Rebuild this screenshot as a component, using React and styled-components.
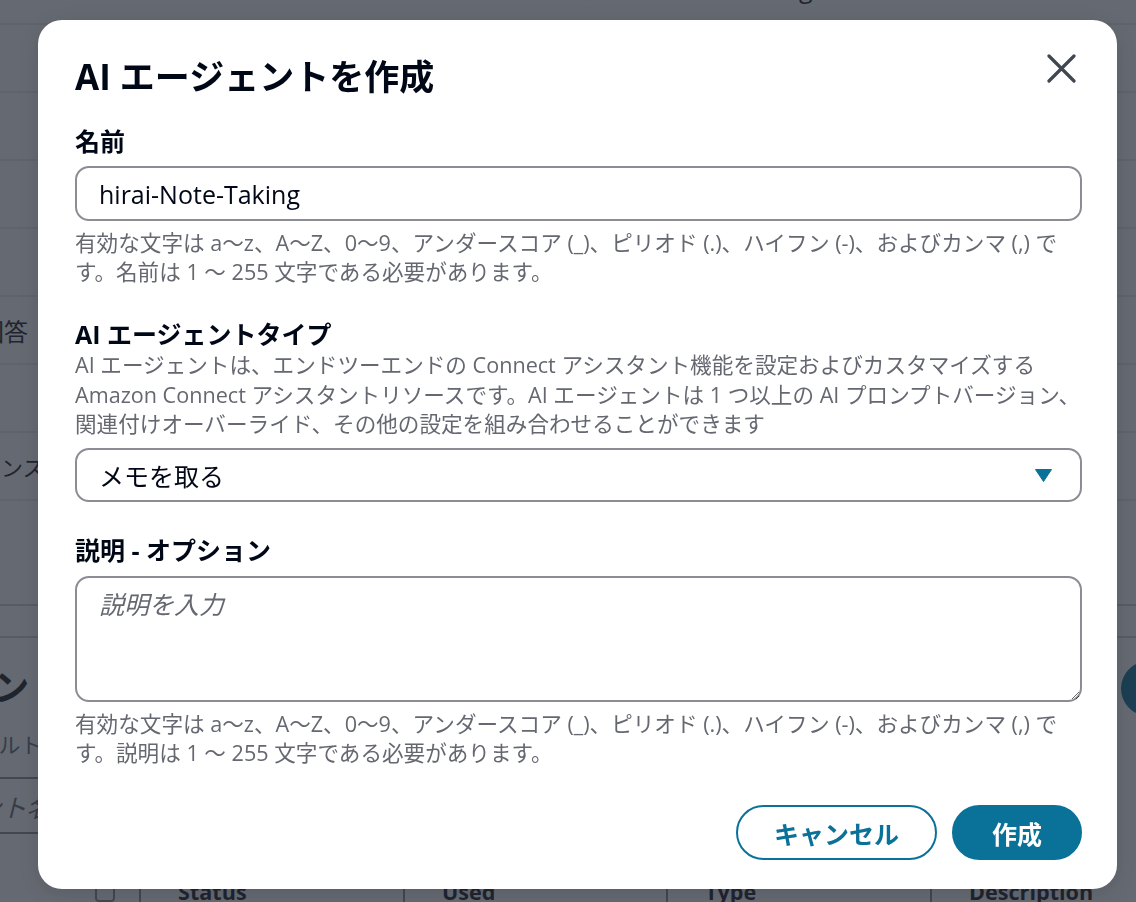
import React from 'react';
import styled, { createGlobalStyle } from 'styled-components';

const FONT = `"Open Sans", "Noto Sans CJK JP", "Noto Sans", sans-serif`;
const TEAL = '#0a7299';

const GlobalStyle = createGlobalStyle`
  html, body { margin: 0; padding: 0; }
  body {
    font-family: ${FONT};
    color: #000716;
    background: #ffffff;
    -webkit-font-smoothing: antialiased;
  }
  *, *::before, *::after { box-sizing: border-box; }
`;

/* ---------- background page (under the overlay) ---------- */

const Page = styled.div`
  width: 1136px;
  height: 902px;
  overflow: hidden;
  background: #ffffff;
  display: flex;
  flex-direction: column;
  color: #16191f;
`;

const TopStrip = styled.div`
  height: 25px;
  flex: none;
  border-bottom: 2px solid #e9ebed;
  padding-left: 355px;
  overflow: hidden;
`;

const TopText = styled.div`
  font-size: 25px;
  line-height: 32px;
  margin-top: -28px;
  white-space: nowrap;
`;

const RowList = styled.div`
  display: flex;
  flex-direction: column;
`;

const ListRow = styled.div`
  height: 68px;
  flex: none;
  display: flex;
  align-items: center;
  border-bottom: 2px solid #e9ebed;
  overflow: hidden;
`;

const RowText = styled.span`
  font-size: ${p => p.$size || 22}px;
  white-space: nowrap;
  margin-left: ${p => p.$shift}px;
`;

const SectionEnd = styled.div`
  height: 105px;
  flex: none;
  border-bottom: 2px solid #d1d1d8;
`;

const Section = styled.div`
  margin-top: 30px;
  border-top: 2px solid #d1d1d8;
  padding-top: 26px;
  display: flex;
  flex-direction: column;
`;

const SectionHeader = styled.div`
  display: flex;
  align-items: center;
  justify-content: space-between;
  height: 48px;
`;

const BgHeading = styled.h2`
  margin: 0 0 0 -150px;
  font-size: 36px;
  line-height: 44px;
  font-weight: 700;
  white-space: nowrap;
`;

const BgPrimary = styled.button`
  flex: none;
  height: 55px;
  width: 160px;
  margin-right: -145px;
  border: none;
  border-radius: 28px;
  background: ${TEAL};
  color: #fff;
  font-family: ${FONT};
  font-size: 25px;
  font-weight: 700;
`;

const BgSub = styled.div`
  margin: 18px 0 0 -66px;
  font-size: 21.6px;
  line-height: 29px;
  color: #5f6b7a;
  white-space: nowrap;
`;

const BgSearch = styled.div`
  margin: 18px 0 0 -147px;
  width: 560px;
  height: 57px;
  border: 2px solid #8c8c94;
  border-radius: 14px;
  display: flex;
  align-items: center;
  padding-left: 22px;
  font-size: 25px;
  font-style: italic;
  color: #656871;
  white-space: nowrap;
`;

const TableHead = styled.div`
  margin-top: 43px;
  display: grid;
  grid-template-columns: 139px 264px 263px 264px 206px;
  font-size: 21.6px;
  line-height: 29px;
  font-weight: 700;
`;

const HeadCell = styled.div`
  padding-left: ${p => (p.$first ? 95 : 37)}px;
  border-left: ${p => (p.$first ? 'none' : '2px solid #8c8c94')};
  white-space: nowrap;
  display: flex;
  align-items: center;
`;

const CheckBox = styled.span`
  width: 20px;
  height: 20px;
  border: 2px solid #8c8c94;
  border-radius: 4px;
`;

/* ---------- overlay + modal ---------- */

const Backdrop = styled.div`
  position: fixed;
  inset: 0;
  background: rgba(36, 42, 52, 0.7);
  display: flex;
  align-items: flex-start;
  padding: 20px 19px 0 38px;
`;

const Modal = styled.div`
  width: 1079px;
  background: #ffffff;
  border-radius: 24px;
  padding: 37px 35px 29px 37px;
  display: flex;
  flex-direction: column;
  box-shadow: 0 4px 20px rgba(0, 7, 22, 0.12);
`;

const Header = styled.div`
  display: flex;
  justify-content: space-between;
  align-items: flex-start;
`;

const Title = styled.h1`
  margin: 0;
  font-size: 35px;
  line-height: 40px;
  font-weight: 700;
  color: #000716;
`;

const CloseButton = styled.button`
  width: 36px;
  height: 36px;
  margin: -7px 3px 0 0;
  padding: 0;
  border: none;
  background: transparent;
  display: flex;
  align-items: center;
  justify-content: center;
  cursor: pointer;
`;

const Form = styled.div`
  margin-top: 28px;
  display: flex;
  flex-direction: column;
  gap: 32px;
`;

const Field = styled.div`
  display: flex;
  flex-direction: column;
`;

const Label = styled.label`
  font-size: 25px;
  line-height: 32px;
  font-weight: 700;
  color: #000716;
  margin-bottom: ${p => p.$mb}px;
`;

const Secondary = styled.div`
  font-size: 21.6px;
  line-height: ${p => p.$lh || 29}px;
  color: #656871;
  margin-top: ${p => p.$mt || 0}px;
  margin-bottom: ${p => p.$mb || 0}px;
`;

const TextInput = styled.input`
  height: 55px;
  width: 100%;
  border: 2px solid #8c8c94;
  border-radius: 14px;
  padding: 0 22px;
  font-family: ${FONT};
  font-size: 25px;
  color: #000716;
  background: #fff;
  outline: none;
`;

const SelectTrigger = styled.button`
  height: 54px;
  width: 100%;
  border: 2px solid #8c8c94;
  border-radius: 14px;
  padding: 0 28px 0 22px;
  display: flex;
  align-items: center;
  justify-content: space-between;
  font-family: ${FONT};
  font-size: 25px;
  color: #000716;
  background: #fff;
  cursor: pointer;
`;

const TextArea = styled.textarea`
  height: 126px;
  width: 100%;
  border: 2px solid #8c8c94;
  border-radius: 14px;
  padding: 10px 22px;
  font-family: ${FONT};
  font-size: 25px;
  line-height: 32px;
  color: #000716;
  background: #fff;
  resize: vertical;
  outline: none;
  display: block;

  &::placeholder {
    color: #656871;
    font-style: italic;
  }
`;

const Footer = styled.div`
  margin-top: 38.5px;
  display: flex;
  justify-content: flex-end;
  gap: 15px;
`;

const Button = styled.button`
  height: 55px;
  padding: 0 ${p => (p.$primary ? 38 : 36)}px;
  border-radius: 28px;
  border: 2px solid ${TEAL};
  background: ${p => (p.$primary ? TEAL : '#ffffff')};
  color: ${p => (p.$primary ? '#ffffff' : TEAL)};
  font-family: ${FONT};
  font-size: 25px;
  font-weight: 700;
  cursor: pointer;
`;

const CloseIcon = () => (
  <svg width="29" height="29" viewBox="0 0 29 29" fill="none">
    <path d="M2 2 L27 27 M27 2 L2 27" stroke="#414750" strokeWidth="3.2" strokeLinecap="round" />
  </svg>
);

const CaretDown = () => (
  <svg width="17" height="13" viewBox="0 0 17 13">
    <path d="M0.5 0.5 H16.5 L8.5 12.5 Z" fill={TEAL} stroke={TEAL} strokeLinejoin="round" />
  </svg>
);

const rows = [
  { text: '' },
  { text: '' },
  { text: '' },
  { text: '' },
  { text: '回答', shift: -20, size: 24 },
  { text: '' },
  { text: 'トランスクリプト', shift: -43 },
];

export default function App() {
  return (
    <>
      <GlobalStyle />
      <Page>
        <TopStrip>
          <TopText>AI エージェントビルダー — Note-Taking</TopText>
        </TopStrip>
        <RowList>
          {rows.map((r, i) => (
            <ListRow key={i}>
              <RowText $shift={r.shift || 0} $size={r.size}>{r.text}</RowText>
            </ListRow>
          ))}
        </RowList>
        <SectionEnd />
        <Section>
          <SectionHeader>
            <BgHeading>エージェント</BgHeading>
            <BgPrimary>作成</BgPrimary>
          </SectionHeader>
          <BgSub>デフォルト</BgSub>
          <BgSearch>エージェント名で検索</BgSearch>
          <TableHead>
            <HeadCell $first><CheckBox /></HeadCell>
            <HeadCell>Status</HeadCell>
            <HeadCell>Used</HeadCell>
            <HeadCell>Type</HeadCell>
            <HeadCell>Description</HeadCell>
          </TableHead>
        </Section>
      </Page>

      <Backdrop>
        <Modal role="dialog" aria-label="AI エージェントを作成">
          <Header>
            <Title>AI エージェントを作成</Title>
            <CloseButton aria-label="閉じる"><CloseIcon /></CloseButton>
          </Header>

          <Form>
            <Field>
              <Label $mb={9}>名前</Label>
              <TextInput defaultValue="hirai-Note-Taking" />
              <Secondary $mt={7}>
                有効な文字は a〜z、A〜Z、0〜9、アンダースコア (_)、ピリオド (.)、ハイフン (-)、およびカンマ (,) で<br />す。名前は 1 〜 255 文字である必要があります。
              </Secondary>
            </Field>

            <Field>
              <Label $mb={0}>AI エージェントタイプ</Label>
              <Secondary $lh={29.5} $mb={9.5}>
                AI エージェントは、エンドツーエンドの Connect アシスタント機能を設定およびカスタマイズする<br />
                Amazon Connect アシスタントリソースです。AI エージェントは 1 つ以上の AI プロンプトバージョン、<br />
                関連付けオーバーライド、その他の設定を組み合わせることができます
              </Secondary>
              <SelectTrigger type="button">
                <span>メモを取る</span>
                <CaretDown />
              </SelectTrigger>
            </Field>

            <Field>
              <Label $mb={10}>説明 - オプション</Label>
              <TextArea placeholder="説明を入力" />
              <Secondary $mt={6.5}>
                有効な文字は a〜z、A〜Z、0〜9、アンダースコア (_)、ピリオド (.)、ハイフン (-)、およびカンマ (,) で<br />す。説明は 1 〜 255 文字である必要があります。
              </Secondary>
            </Field>
          </Form>

          <Footer>
            <Button type="button">キャンセル</Button>
            <Button type="button" $primary>作成</Button>
          </Footer>
        </Modal>
      </Backdrop>
    </>
  );
}
